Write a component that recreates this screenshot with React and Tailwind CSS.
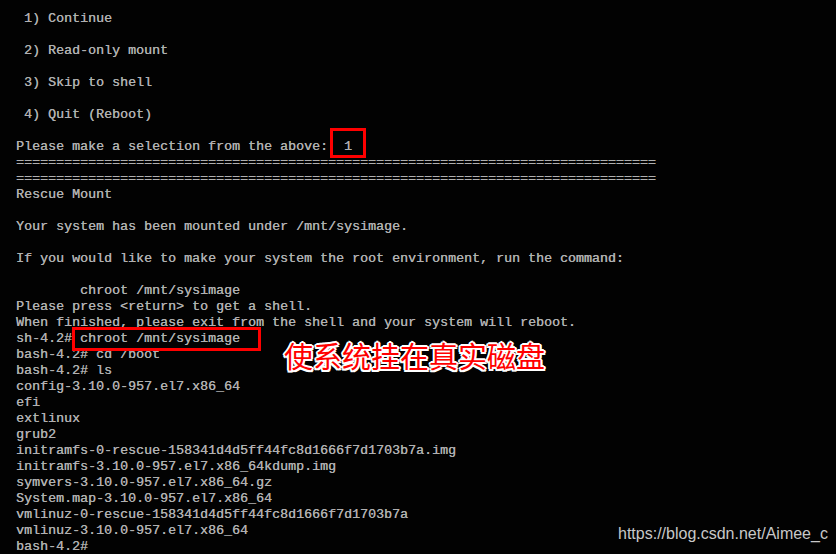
import React from "react";

const lines = [
  " 1) Continue",
  "",
  " 2) Read-only mount",
  "",
  " 3) Skip to shell",
  "",
  " 4) Quit (Reboot)",
  "",
  "Please make a selection from the above:  1",
  "================================================================================",
  "================================================================================",
  "Rescue Mount",
  "",
  "Your system has been mounted under /mnt/sysimage.",
  "",
  "If you would like to make your system the root environment, run the command:",
  "",
  "        chroot /mnt/sysimage",
  "Please press <return> to get a shell.",
  "When finished, please exit from the shell and your system will reboot.",
  "sh-4.2# chroot /mnt/sysimage",
  "bash-4.2# cd /boot",
  "bash-4.2# ls",
  "config-3.10.0-957.el7.x86_64",
  "efi",
  "extlinux",
  "grub2",
  "initramfs-0-rescue-158341d4d5ff44fc8d1666f7d1703b7a.img",
  "initramfs-3.10.0-957.el7.x86_64kdump.img",
  "symvers-3.10.0-957.el7.x86_64.gz",
  "System.map-3.10.0-957.el7.x86_64",
  "vmlinuz-0-rescue-158341d4d5ff44fc8d1666f7d1703b7a",
  "vmlinuz-3.10.0-957.el7.x86_64",
  "bash-4.2#",
];

export default function App() {
  return (
    <div className="relative w-[836px] h-[554px] overflow-hidden bg-[#020202]">
      <div className="pt-[11px] pl-4 font-['Liberation_Mono','DejaVu_Sans_Mono',monospace] text-[13.334px] leading-4 text-[#b0b0b0] whitespace-pre [text-shadow:0.35px_0_0_#b0b0b0]">
        {lines.map((l, i) => (
          <div key={i} className="h-4">{l}</div>
        ))}
      </div>

      <div className="absolute left-[330px] top-[128px] w-[36px] h-[30px] border-[3px] border-[#ff0000]" />
      <div className="absolute left-[72px] top-[327px] w-[189px] h-[24px] border-[3px] border-[#ff0000]" />

      <div className="absolute left-[284px] top-[338px] font-['Noto_Sans_CJK_SC',sans-serif] text-[29px] leading-[34px] text-[#ff0000] whitespace-nowrap [text-shadow:2px_0_0_#fff,-2px_0_0_#fff,0_2px_0_#fff,0_-2px_0_#fff,1.5px_1.5px_0_#fff,-1.5px_-1.5px_0_#fff,1.5px_-1.5px_0_#fff,-1.5px_1.5px_0_#fff]">
        使系统挂在真实磁盘
      </div>

      <div className="absolute left-[618px] top-[524px] font-['Liberation_Sans',Arial,sans-serif] text-[16px] leading-[20px] text-[#c8c8c8] whitespace-nowrap">
        https://blog.csdn.net/Aimee_c
      </div>
    </div>
  );
}
